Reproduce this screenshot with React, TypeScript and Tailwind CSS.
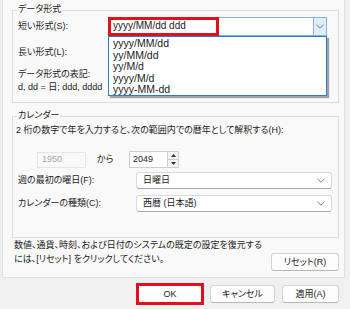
import React from "react";

const formats = ["yyyy/MM/dd", "yy/MM/dd", "yy/M/d", "yyyy/M/d", "yyyy-MM-dd"];

const Chevron: React.FC<{ className?: string }> = ({ className }) => (
  <svg width="8" height="5" viewBox="0 0 8 5" className={className}>
    <path d="M0.5 0.8 L4 4.2 L7.5 0.8" fill="none" stroke="currentColor" strokeWidth="0.9" />
  </svg>
);

const Select: React.FC<{ value: string; width: string }> = ({ value, width }) => (
  <div
    className={`${width} h-[17px] flex items-center justify-between bg-white border border-[#dadada] border-b-[#a8a8a8] rounded-[3px] pl-[6px] pr-[6px]`}
  >
    <span>{value}</span>
    <Chevron className="text-[#707070]" />
  </div>
);

const Button: React.FC<{ label: string; width: string }> = ({ label, width }) => (
  <div
    className={`${width} h-[18px] shrink-0 flex items-center justify-center bg-[#fdfdfd] border border-[#d3d3d3] border-b-[#b8b8b8] rounded-[3px]`}
  >
    {label}
  </div>
);

const App: React.FC = () => {
  return (
    <div className="w-[350px] h-[309px] bg-[#f0f0f0] overflow-hidden text-[9px] leading-none text-[#1b1b1b] font-['Liberation_Sans','Noto_Sans_CJK_JP',sans-serif] [font-feature-settings:'palt']">
      {/* tab page */}
      <div className="ml-[2px] w-[343px] h-[278px] bg-[#f9f9f9] border-x border-b border-[#e0e0e0] pt-[10px]">
        {/* データ形式 */}
        <div className="relative ml-[9px] w-[327px] h-[93px] border border-[#dcdcdc]">
          <span className="absolute -top-[6px] left-[4px] px-[1px] bg-[#f9f9f9]">データ形式</span>

          <div className="pt-[5px] flex items-center h-[25px]">
            <div className="w-[95px] pl-[5px]">短い形式(S):</div>
            <div className="relative w-[219px] h-[19px] flex bg-white border border-[#7eb4ea] text-[10px]">
              <div className="flex-1 flex items-center pl-[4px]">yyyy/MM/dd ddd</div>
              <div className="w-[13px] flex items-center justify-center bg-[#e1eefa] border-l border-[#7eb4ea]">
                <Chevron className="text-[#5b6b7b]" />
              </div>
              {/* red highlight */}
              <div className="absolute -left-[1px] -top-[1px] w-[111px] h-[19px] border-[3px] border-[#e50e1c]" />
              {/* open list */}
              <div className="absolute -left-[1px] top-[18px] w-[219px] h-[60px] bg-white border border-[#2a7bd0] shadow-[2px_2px_1px_rgba(0,0,0,0.35)] pt-[1px] z-10">
                {formats.map((f) => (
                  <div key={f} className="h-[11.6px] flex items-center pl-[4px] text-[10.5px]">
                    {f}
                  </div>
                ))}
              </div>
            </div>
          </div>

          <div className="mt-[7px] flex items-center h-[19px]">
            <div className="w-[95px] pl-[5px]">長い形式(L):</div>
            <Select value="" width="w-[219px]" />
          </div>

          <div className="mt-[6px] pl-[5px] leading-[13px]">
            <div>データ形式の表記:</div>
            <div className="whitespace-nowrap">d, dd = 日; ddd, dddd</div>
          </div>
        </div>

        {/* カレンダー */}
        <div className="relative mt-[13px] ml-[9px] w-[327px] h-[122px] border border-[#dcdcdc]">
          <span className="absolute -top-[6px] left-[4px] px-[1px] bg-[#f9f9f9]">カレンダー</span>

          <div className="pt-[7px] pl-[3px] leading-[13px] whitespace-nowrap">
            2 桁の数字で年を入力すると、次の範囲内での暦年として解釈する(H):
          </div>

          <div className="mt-[14px] flex items-center h-[17px]">
            <div className="ml-[24px] w-[49px] h-[16px] flex items-center pl-[4px] border border-[#e6e6e6] text-[#a6a6a6]">
              1950
            </div>
            <div className="ml-[11px] w-[32px]">から</div>
            <div className="w-[50px] h-[17px] flex bg-white border border-[#cfcfcf]">
              <div className="flex-1 flex items-center pl-[3px]">2049</div>
              <div className="w-[11px] flex flex-col border-l border-[#cfcfcf] bg-[#f3f3f3]">
                <div className="flex-1 flex items-center justify-center border-b border-[#cfcfcf]">
                  <svg width="5" height="3" viewBox="0 0 5 3">
                    <path d="M0 3 L2.5 0 L5 3 Z" fill="#333" />
                  </svg>
                </div>
                <div className="flex-1 flex items-center justify-center">
                  <svg width="5" height="3" viewBox="0 0 5 3">
                    <path d="M0 0 L2.5 3 L5 0 Z" fill="#333" />
                  </svg>
                </div>
              </div>
            </div>
          </div>

          <div className="mt-[4px] flex items-center">
            <div className="w-[123px] pl-[5px]">週の最初の曜日(F):</div>
            <Select value="日曜日" width="w-[196px]" />
          </div>

          <div className="mt-[6px] flex items-center">
            <div className="w-[123px] pl-[5px]">カレンダーの種類(C):</div>
            <Select value="西暦 (日本語)" width="w-[196px]" />
          </div>
        </div>

        {/* reset */}
        <div className="flex justify-between items-start">
          <div className="pl-[11px] leading-[14px] whitespace-nowrap">
            数値、通貨、時刻、および日付のシステムの既定の設定を復元する
            <br />
            には、[リセット] をクリックしてください。
          </div>
          <div className="mt-[15px] mr-[5px] shrink-0">
            <Button label="リセット(R)" width="w-[68px]" />
          </div>
        </div>
      </div>

      {/* dialog buttons */}
      <div className="mt-[5px] h-[22px] flex items-center justify-end pr-[11px]">
        <div className="w-[68px] h-[22px] flex items-center justify-center bg-white border-[3px] border-[#e50e1c]">
          OK
        </div>
        <div className="ml-[6px]">
          <Button label="キャンセル" width="w-[65px]" />
        </div>
        <div className="ml-[7px]">
          <Button label="適用(A)" width="w-[57px]" />
        </div>
      </div>
    </div>
  );
};

export default App;
